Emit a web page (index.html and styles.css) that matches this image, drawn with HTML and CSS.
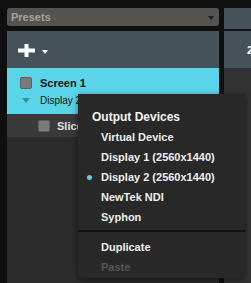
FILE: index.html
```html
<!DOCTYPE html>
<html>
<head>
<meta charset="utf-8">
<link rel="stylesheet" href="styles.css">
</head>
<body>
<div class="app">
  <div class="left">
    <div class="presets"><span class="presets-label">Presets</span><span class="presets-arrow"></span></div>
    <div class="toolbar">
      <svg class="plus" width="17" height="13" viewBox="0 0 17 13"><rect x="0" y="4.5" width="17" height="4" fill="#fff"/><rect x="6.5" y="0" width="4" height="13" fill="#fff"/></svg>
      <span class="tool-arrow"></span>
    </div>
    <div class="screen-row">
      <div class="screen-line"><span class="check"></span><span class="screen-name">Screen 1</span></div>
      <div class="screen-line sub"><span class="tri"></span><span class="screen-display">Display 2</span></div>
    </div>
    <div class="slice-row"><span class="check"></span><span class="slice-name">Slice</span></div>
    <div class="left-rest"></div>
  </div>
  <div class="right">
    <div class="right-head"></div>
    <div class="right-tool"><span class="right-num">2560</span></div>
    <div class="right-rest"></div>
  </div>
</div>
<div class="menu">
  <div class="menu-head">Output Devices</div>
  <div class="menu-item">Virtual Device</div>
  <div class="menu-item">Display 1 (2560x1440)</div>
  <div class="menu-item checked">Display 2 (2560x1440)</div>
  <div class="menu-item">NewTek NDI</div>
  <div class="menu-item">Syphon</div>
  <div class="menu-sep"></div>
  <div class="menu-item">Duplicate</div>
  <div class="menu-item disabled">Paste</div>
</div>
</body>
</html>
```
FILE: styles.css
```css
html, body {
  margin: 0;
  padding: 0;
  background: #0f0f0f;
  width: 251px;
  height: 283px;
  overflow: hidden;
  font-family: "Liberation Sans", Arial, sans-serif;
}
.app {
  display: grid;
  grid-template-columns: 212px 27px;
  column-gap: 5px;
  padding: 8px 0 0 7px;
  height: 275px;
}
.left {
  display: flex;
  flex-direction: column;
}
.presets {
  height: 18px;
  background: #55534f;
  border-radius: 3px;
  display: flex;
  align-items: center;
  justify-content: space-between;
  padding: 0 5px 0 4px;
}
.presets-label {
  color: #a3a29f;
  font-size: 11px;
  font-weight: bold;
}
.presets-arrow {
  width: 0;
  height: 0;
  border-left: 3px solid transparent;
  border-right: 3px solid transparent;
  border-top: 4px solid #1e1e1e;
  margin-top: 2px;
}
.toolbar {
  margin-top: 5px;
  height: 37px;
  background: #45525a;
  display: flex;
  align-items: center;
  padding-left: 11px;
}
.plus {
  display: block;
  margin-top: 1px;
}
.tool-arrow {
  width: 0;
  height: 0;
  border-left: 3px solid transparent;
  border-right: 3px solid transparent;
  border-top: 4px solid #fff;
  margin-left: 7px;
  margin-top: 4px;
}
.screen-row {
  height: 46px;
  background: #5ad4e8;
  display: flex;
  flex-direction: column;
  padding-top: 9px;
  box-sizing: border-box;
}
.screen-line {
  display: flex;
  align-items: center;
  padding-left: 13px;
  height: 12px;
}
.screen-line.sub {
  margin-top: 5px;
  padding-left: 15px;
}
.check {
  width: 10px;
  height: 10px;
  background: #7a7a7a;
  border: 1px solid #5e5e5e;
  border-radius: 2px;
  flex: none;
}
.screen-name {
  margin-left: 8px;
  font-size: 11px;
  font-weight: bold;
  color: #111;
}
.tri {
  width: 0;
  height: 0;
  border-left: 4px solid transparent;
  border-right: 4px solid transparent;
  border-top: 5px solid #3f8c9b;
  flex: none;
}
.screen-display {
  margin-left: 10px;
  font-size: 10px;
  color: #111;
}
.slice-row {
  height: 23px;
  background: #393939;
  display: flex;
  align-items: center;
  padding-left: 31px;
}
.slice-name {
  margin-left: 7px;
  font-size: 11px;
  font-weight: bold;
  color: #e0e0e0;
}
.left-rest {
  flex: 1;
  background: #2b2b2b;
}
.right {
  display: flex;
  flex-direction: column;
  overflow: hidden;
}
.right-head {
  height: 21px;
  background: #46535a;
}
.right-tool {
  margin-top: 2px;
  height: 37px;
  background: #45525a;
  display: flex;
  align-items: center;
  padding-left: 23px;
  white-space: nowrap;
}
.right-num {
  color: #fff;
  font-size: 11px;
  font-weight: bold;
}
.right-rest {
  flex: 1;
  background: #333333;
}
.menu {
  position: absolute;
  left: 78px;
  top: 94px;
  width: 167px;
  height: 184px;
  box-sizing: border-box;
  background: #282828;
  border-radius: 0 0 4px 4px;
  box-shadow: 0 2px 6px rgba(0,0,0,0.5);
  padding-top: 13px;
}
.menu-head {
  padding-left: 14px;
  font-size: 12px;
  font-weight: bold;
  color: #f4f4f4;
  height: 20px;
  line-height: 20px;
}
.menu-item {
  position: relative;
  padding-left: 23px;
  font-size: 11px;
  font-weight: bold;
  color: #efefef;
  height: 20px;
  line-height: 20px;
}
.menu-item.checked::before {
  content: "";
  position: absolute;
  left: 9px;
  top: 8px;
  width: 5px;
  height: 5px;
  border-radius: 50%;
  background: #5ad4e8;
}
.menu-item.disabled {
  color: #555;
}
.menu-sep {
  height: 2px;
  background: #121212;
  margin: 3px 0 5px 0;
}
```
